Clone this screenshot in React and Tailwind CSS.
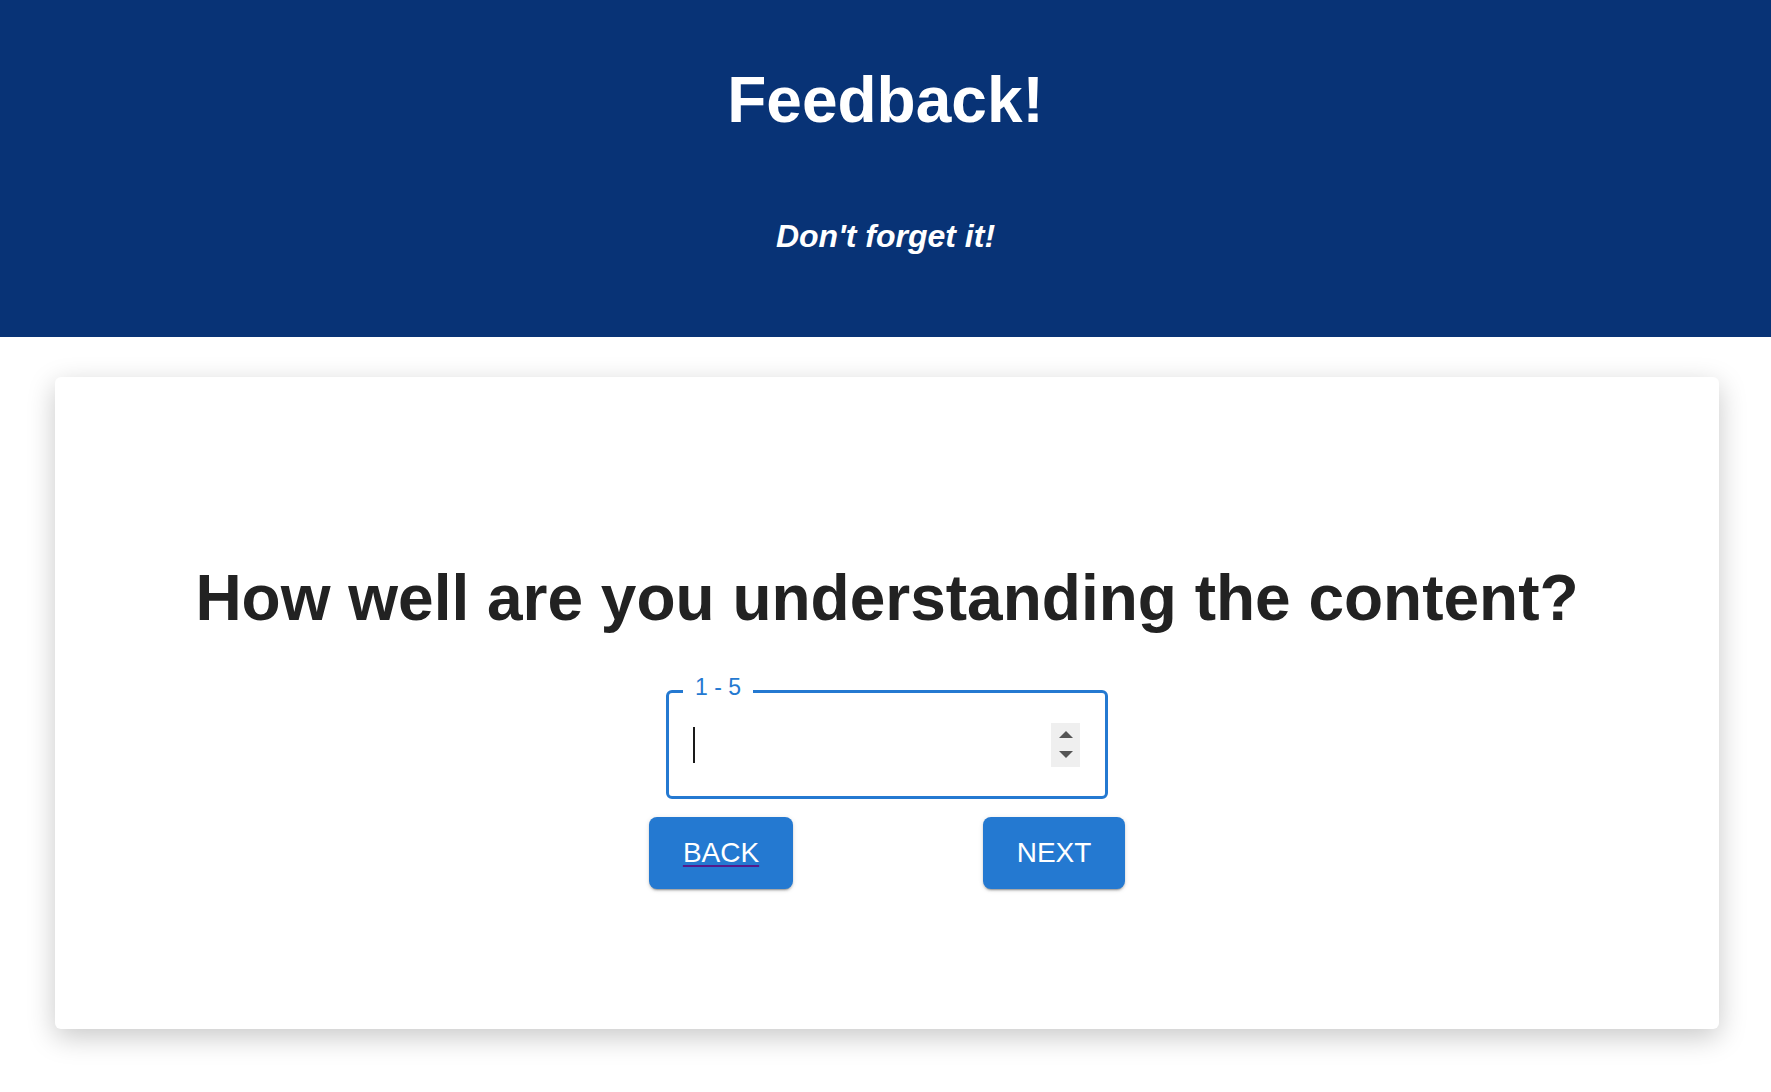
export default function App() {
  return (
    <div
      className="min-h-[1092px] bg-white"
      style={{ fontFamily: '"Liberation Sans", Arial, Helvetica, sans-serif' }}
    >
      {/* Header */}
      <header className="h-[337px] bg-[#083376] pt-[63px] text-center text-white">
        <h1 className="text-[64px] font-bold leading-[74px]">Feedback!</h1>
        <p className="mt-[81px] text-[32px] font-bold italic leading-[37px]">
          Don't forget it!
        </p>
      </header>

      {/* Card */}
      <main className="ml-[55px] mr-[52px] mt-[40px] h-[652px] rounded-md bg-white pt-[184px] shadow-[0_8px_28px_rgba(0,0,0,0.22)]">
        <h2 className="text-center text-[64px] font-bold leading-[74px] text-[#222222]">
          How well are you understanding the content?
        </h2>

        <div className="mx-auto mt-[55px] w-[442px]">
          <div className="relative flex h-[109px] items-center rounded-md border-[3px] border-[#2479d1] pl-[24px] pr-[25px]">
            <span className="absolute left-[14px] top-[-19px] bg-white px-[12px] text-[23px] leading-[26px] text-[#2479d1]">
              1 - 5
            </span>
            <div className="h-[36px] w-[2px] bg-[#1a1a1a]" />
            <div className="ml-auto flex h-[44px] w-[29px] flex-col items-center justify-center gap-[13px] bg-[#efefef]">
              <svg width="14" height="7" viewBox="0 0 14 7">
                <path d="M7 0 L14 7 L0 7 Z" fill="#555555" />
              </svg>
              <svg width="14" height="7" viewBox="0 0 14 7">
                <path d="M0 0 L14 0 L7 7 Z" fill="#555555" />
              </svg>
            </div>
          </div>

          <div className="mx-[-17px] mt-[18px] flex justify-between">
            <a
              href="#"
              className="flex h-[72px] w-[144px] items-center justify-center rounded-lg bg-[#2479d1] text-[28px] text-white underline decoration-[#551a8b] decoration-2 underline-offset-[3px] shadow-[0_3px_1px_-2px_rgba(0,0,0,0.2),0_2px_2px_0_rgba(0,0,0,0.14),0_1px_5px_0_rgba(0,0,0,0.12)]"
            >
              BACK
            </a>
            <button
              type="button"
              className="flex h-[72px] w-[142px] items-center justify-center rounded-lg bg-[#2479d1] text-[28px] text-white shadow-[0_3px_1px_-2px_rgba(0,0,0,0.2),0_2px_2px_0_rgba(0,0,0,0.14),0_1px_5px_0_rgba(0,0,0,0.12)]"
            >
              NEXT
            </button>
          </div>
        </div>
      </main>
    </div>
  );
}
